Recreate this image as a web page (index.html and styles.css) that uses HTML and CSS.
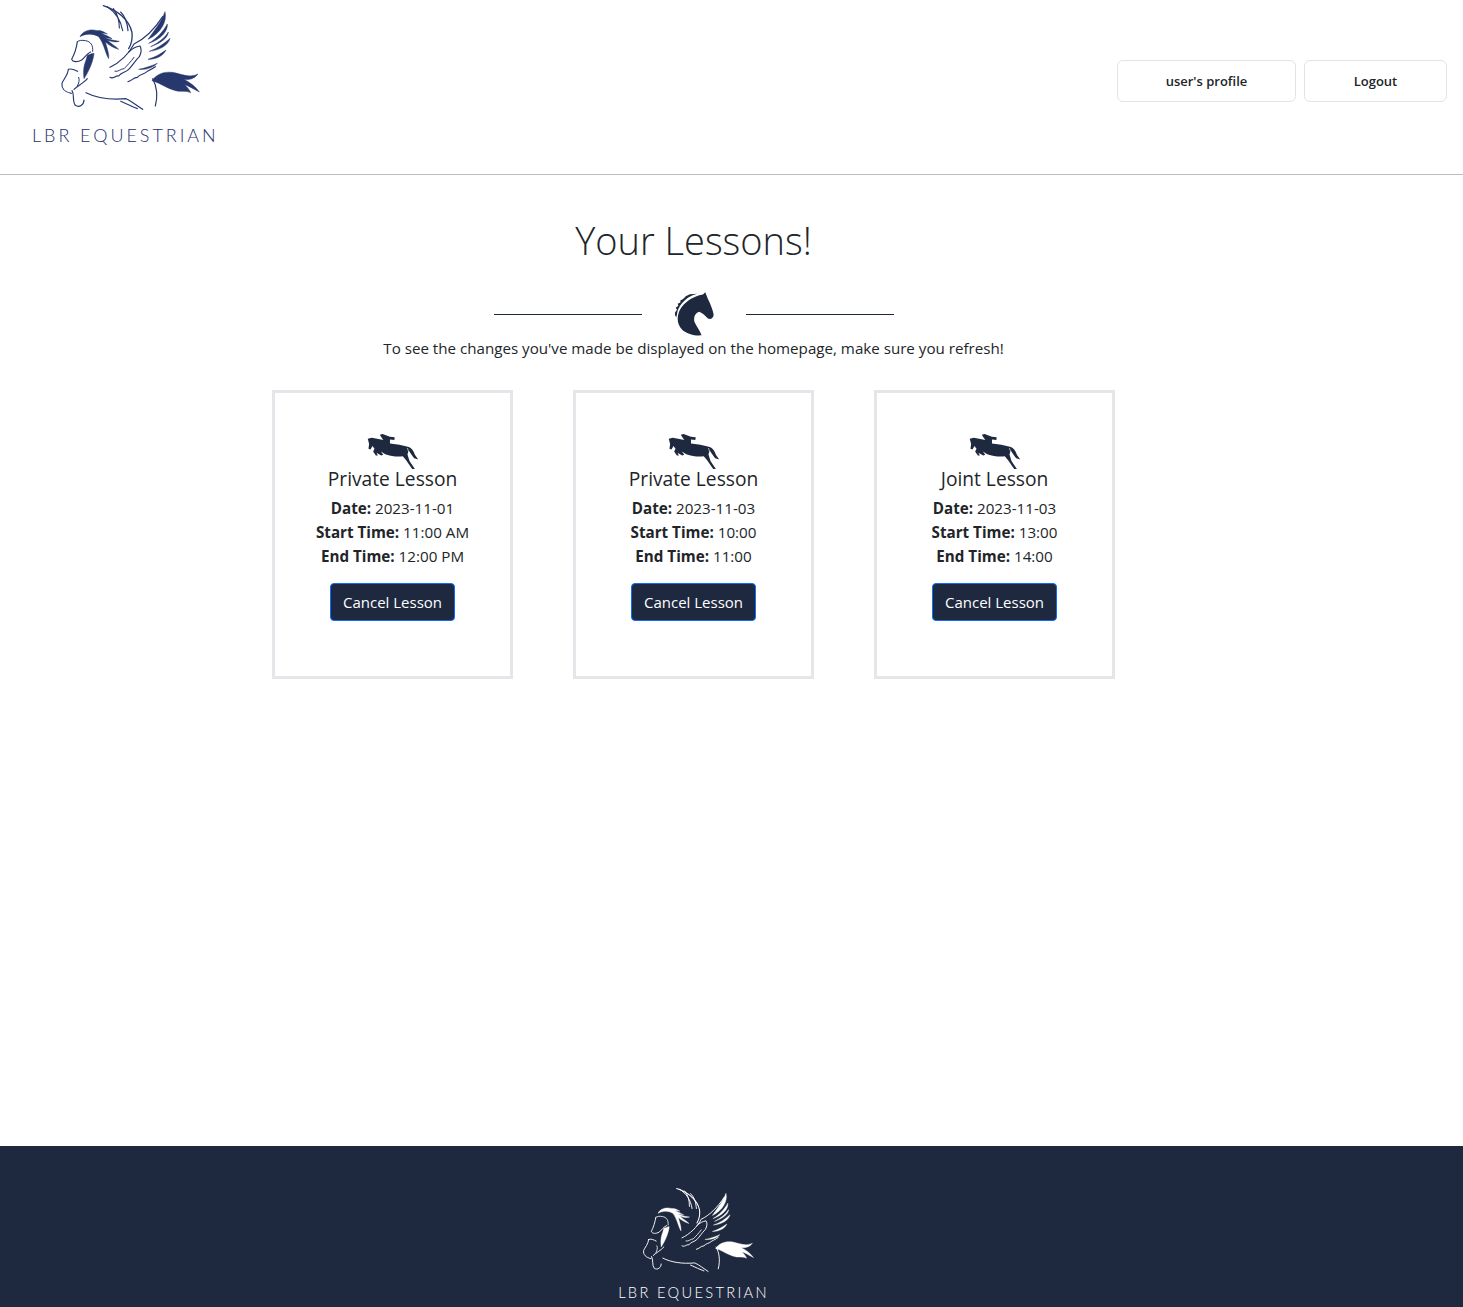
FILE: index.html
```html
<!DOCTYPE html>
<html>
<head>
    <title>Your Lessons</title>
    <link rel="stylesheet" href="styles.css">
</head>
<body>
<svg class="defs" width="0" height="0">
    <symbol id="pegasus" viewBox="180 0 435 345">
        <g fill="none" stroke="currentColor" stroke-linecap="round" stroke-linejoin="round" stroke-width="3">
            <!-- back wing -->
            <path stroke-width="4" d="M310 17C350 30 388 58 396 98C398 120 393 135 386 146"/>
            <path stroke-width="3.5" d="M322 20C346 36 362 58 368 92M340 26C352 42 358 58 358 84M362 36C376 50 382 66 384 92"/>
            <!-- front wing -->
            <path stroke-width="3.5" d="M330 202C360 188 388 160 402 132C432 118 462 90 488 50"/>
            <path stroke-width="3.5" d="M330 232C340 238 346 226 356 228C364 216 376 218 386 208C396 198 404 184 418 170C424 158 426 148 420 138C408 140 396 146 386 156"/>
            <path d="M345 214C356 216 362 206 372 206C382 196 392 186 402 172"/>
            <path stroke-width="3.5" d="M384 245C394 244 400 232 412 232C420 222 432 224 442 214C450 210 458 206 466 200"/>
            <!-- head and neck -->
            <path d="M232 125C236 121 246 120 256 122C272 124 280 136 278 154"/>
            <path stroke-width="3.5" d="M232 125C230 140 222 165 215 178C218 186 232 188 245 180C254 172 262 160 272 156"/>
            <path d="M236 232C240 240 236 250 232 258"/>
            <!-- legs and body -->
            <path stroke-width="3.5" d="M205 208C215 204 225 210 233 214M205 208C204 226 190 238 186 250C184 264 194 276 214 280"/>
            <path stroke-width="3.5" d="M216 272C224 284 216 304 226 316C238 324 252 314 252 300M222 268C232 258 250 250 262 236"/>
            <path stroke-width="3.5" d="M258 278C290 294 330 300 378 296C396 304 412 318 428 328"/>
            <path stroke-width="3.5" d="M362 304C380 312 396 320 412 326"/>
            <path stroke-width="3.5" d="M458 236C470 258 474 286 466 318"/>
        </g>
        <g fill="currentColor" stroke="currentColor" stroke-width="1.5" stroke-linejoin="round">
            <!-- mane -->
            <path d="M240 110C248 92 272 86 292 92C302 90 312 96 322 102C316 100 310 100 304 100C318 106 328 110 336 116C326 114 318 114 312 112C322 118 344 122 358 124C346 128 332 124 322 120C334 132 346 138 356 148C340 144 326 134 316 126C322 146 328 164 326 176C316 160 312 130 296 110C280 100 256 100 240 110Z"/>
            <path d="M262 166C272 162 278 160 282 160C280 182 268 212 252 236C250 220 250 206 254 192C258 182 260 174 262 166Z"/>
            <!-- wing feathers -->
            <path d="M495 35C502 65 482 100 444 118C462 92 484 66 495 35Z"/>
            <path d="M502 72C504 94 482 118 446 130C470 116 490 94 502 72Z"/>
            <path d="M505 96C504 112 486 128 452 140C476 128 494 114 505 96Z"/>
            <path d="M510 115C506 134 482 150 448 154C472 146 494 130 510 115Z"/>
            <path d="M498 150C490 168 468 178 444 178C464 172 482 162 498 150Z"/>
            <path d="M472 190C458 204 438 210 416 208C436 204 454 198 472 190Z"/>
            <!-- tail -->
            <path d="M456 242C468 224 490 214 516 217C540 220 566 236 594 222C582 238 566 240 550 238C570 246 588 262 598 276C580 266 566 258 554 254C562 262 568 268 572 278C556 270 540 278 520 270C496 262 474 246 456 242Z"/>
        </g>
    </symbol>
    <symbol id="horse-head" viewBox="583 40 119 129">
        <path fill="currentColor" d="M676 40L684 60C692 76 698 92 701 106C701 116 692 122 684 118C676 110 668 102 658 98C646 102 640 114 644 128C650 142 660 152 665 168C645 170 622 164 608 152C594 138 590 118 598 98C606 78 628 60 650 52C658 48 666 48 670 46Z"/>
        <path fill="currentColor" d="M586 100L592 92L588 86L596 80L594 74L602 70L602 64L610 60L618 52L630 46L652 44L640 48C620 56 602 74 594 94L590 114L586 108Z"/>
    </symbol>
    <symbol id="jumper" viewBox="304 141 154 110">
        <path fill="currentColor" d="M306 158L318 155L345 160L352 162L344 150L342 146L350 144L372 152L386 154L385 162L372 160L372 172L400 176L425 182C438 186 443 196 446 206L456 220L444 216L436 206L428 194L424 204L430 224L446 248L438 248L420 222L410 210C395 212 375 210 358 204L345 196L352 206L346 208L332 200L336 208L330 208L322 196L326 188L320 180L314 190L308 188L310 174Z"/>
        <path fill="none" stroke="#fff" stroke-width="2" d="M424 186C426 194 430 202 436 208"/>
    </symbol>
</svg>

<header class="topbar">
    <div class="brand">
        <svg class="brand-mark"><use href="#pegasus"></use></svg>
        <div class="brand-name">LBR EQUESTRIAN</div>
    </div>
    <nav class="actions">
        <a class="nav-btn nav-profile" href="#">user's profile</a>
        <a class="nav-btn nav-logout" href="#">Logout</a>
    </nav>
</header>

<main class="content">
    <h1>Your Lessons!</h1>
    <div class="divider">
        <span class="rule"></span>
        <svg class="divider-icon"><use href="#horse-head"></use></svg>
        <span class="rule"></span>
    </div>
    <p class="note">To see the changes you've made be displayed on the homepage, make sure you refresh!</p>

    <section class="lessons">
        <article class="lesson">
            <svg class="lesson-icon"><use href="#jumper"></use></svg>
            <h2>Private Lesson</h2>
            <p><b>Date:</b> 2023-11-01</p>
            <p><b>Start Time:</b> 11:00 AM</p>
            <p><b>End Time:</b> 12:00 PM</p>
            <button type="button" class="cancel">Cancel Lesson</button>
        </article>
        <article class="lesson">
            <svg class="lesson-icon"><use href="#jumper"></use></svg>
            <h2>Private Lesson</h2>
            <p><b>Date:</b> 2023-11-03</p>
            <p><b>Start Time:</b> 10:00</p>
            <p><b>End Time:</b> 11:00</p>
            <button type="button" class="cancel">Cancel Lesson</button>
        </article>
        <article class="lesson">
            <svg class="lesson-icon"><use href="#jumper"></use></svg>
            <h2>Joint Lesson</h2>
            <p><b>Date:</b> 2023-11-03</p>
            <p><b>Start Time:</b> 13:00</p>
            <p><b>End Time:</b> 14:00</p>
            <button type="button" class="cancel">Cancel Lesson</button>
        </article>
    </section>
</main>

<footer class="footer">
    <svg class="footer-mark"><use href="#pegasus"></use></svg>
    <div class="footer-name">LBR EQUESTRIAN</div>
</footer>
</body>
</html>
```

FILE: styles.css
```css
* {
    box-sizing: border-box;
}

body {
    margin: 0;
    min-height: 1307px;
    display: flex;
    flex-direction: column;
    font-family: "Open Sans", "Noto Sans", sans-serif;
    font-size: 15px;
    color: #212529;
    background: #fff;
}

.defs {
    display: block;
    height: 0;
}

.topbar {
    height: 175px;
    display: flex;
    justify-content: space-between;
    padding: 0 16px 0 33px;
    border-bottom: 1px solid #bdbdbd;
}

.brand {
    display: flex;
    flex-direction: column;
    color: #27386f;
}

.brand-mark {
    width: 145px;
    height: 115px;
    margin-left: 27px;
}

.brand-name {
    margin-top: 9px;
    margin-left: -1px;
    font-family: Lato, sans-serif;
    font-weight: 300;
    font-size: 18px;
    line-height: 22px;
    letter-spacing: 2.95px;
    white-space: nowrap;
    color: #1f3070;
}

.actions {
    display: flex;
    gap: 8px;
    margin-top: 60px;
}

.nav-btn {
    height: 42px;
    display: flex;
    align-items: center;
    justify-content: center;
    border: 1px solid #e3e3e3;
    border-radius: 6px;
    font-size: 13px;
    font-weight: 600;
    color: #212529;
    text-decoration: none;
}

.nav-profile {
    width: 179px;
}

.nav-logout {
    width: 143px;
}

.content {
    flex: 1;
    padding: 39px 76px 0 0;
    display: flex;
    flex-direction: column;
    align-items: center;
}

h1 {
    margin: 0;
    font-size: 38px;
    font-weight: 300;
    line-height: 52px;
}

.divider {
    margin-top: 26px;
    height: 44px;
    display: flex;
    align-items: center;
    justify-content: center;
    gap: 32px;
}

.rule {
    width: 148px;
    height: 1px;
    background: #1e293f;
}

.divider-icon {
    width: 40px;
    height: 44px;
    color: #1e293f;
}

.note {
    margin: 0;
    line-height: 24px;
    font-size: 15.15px;
    font-weight: 400;
}

.lessons {
    margin-top: 30px;
    display: flex;
    gap: 60px;
}

.lesson {
    width: 241px;
    height: 289px;
    padding-top: 40px;
    display: flex;
    flex-direction: column;
    align-items: center;
    border: 3px solid #e5e6ea;
}

.lesson-icon {
    width: 52px;
    height: 37px;
    color: #1e293f;
}

.lesson h2 {
    margin: -3px 0 0;
    font-size: 19.2px;
    font-weight: 400;
    line-height: 24px;
}

.lesson p {
    margin: 0;
    line-height: 24px;
    font-size: 15.2px;
    font-weight: 400;
}

.lesson h2 + p {
    margin-top: 5px;
}

.lesson b {
    font-weight: 700;
}

.cancel {
    margin-top: 15px;
    width: 125px;
    height: 38px;
    background: #1e293f;
    border: 1px solid #0d6efd;
    border-radius: 4px;
    color: #fff;
    font-family: inherit;
    font-size: 15px;
}

.footer {
    height: 161px;
    background: #1e293f;
    color: #fff;
    display: flex;
    flex-direction: column;
    align-items: center;
    padding: 38px 76px 0 0;
}

.footer-mark {
    width: 116px;
    height: 92px;
    margin-left: 12px;
}

.footer-name {
    margin-top: 6px;
    font-family: Lato, sans-serif;
    font-weight: 300;
    font-size: 14.7px;
    line-height: 20px;
    letter-spacing: 2.3px;
    white-space: nowrap;
}
```
